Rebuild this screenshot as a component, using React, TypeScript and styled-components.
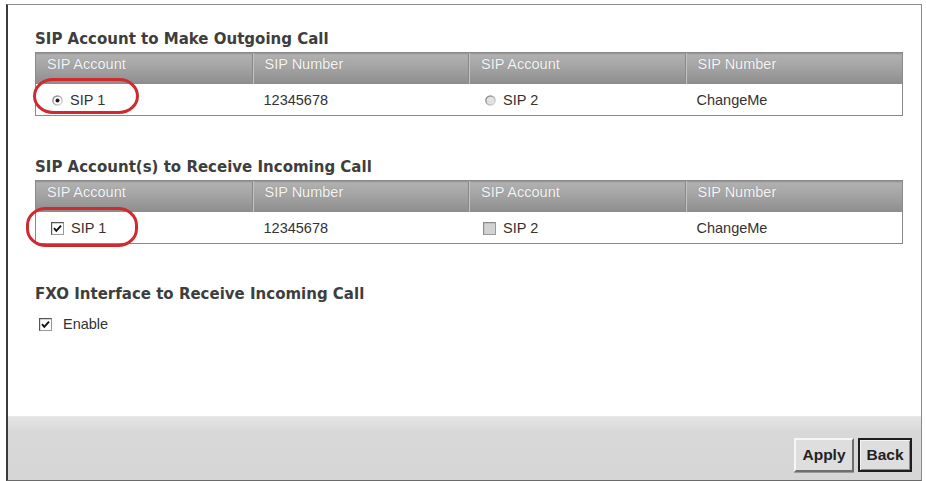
import React from "react";
import styled, { createGlobalStyle } from "styled-components";

const GlobalStyle = createGlobalStyle`
  html, body {
    margin: 0;
    padding: 0;
    background: #ffffff;
  }
  body {
    font-family: "Liberation Sans", Arial, sans-serif;
    color: #333333;
  }
`;

const Frame = styled.div`
  box-sizing: border-box;
  margin: 4px 0 0 6px;
  width: 916px;
  height: 477px;
  border-top: 1px solid #8c8c8c;
  border-left: 2px solid #3a3a3a;
  border-right: 1px solid #8a8a8a;
  border-bottom: 1px solid #6a6a6a;
  display: flex;
  flex-direction: column;
  background: #ffffff;
`;

const Content = styled.div`
  flex: 1;
  padding: 25px 18px 0 27px;
  display: flex;
  flex-direction: column;
`;

const Section = styled.section<{ $gap: number }>`
  margin-top: ${(p) => p.$gap}px;
  display: flex;
  flex-direction: column;
`;

const Title = styled.h2`
  margin: 0 0 4px;
  font-family: "DejaVu Sans", Verdana, sans-serif;
  font-weight: bold;
  font-size: 15px;
  line-height: 18px;
  color: #3e3e3e;
`;

const Table = styled.div`
  box-sizing: border-box;
  border: 1px solid #8a8a8a;
  display: grid;
  grid-template-columns: repeat(4, 1fr);
`;

const HeadCell = styled.div<{ $first?: boolean }>`
  height: 31px;
  box-sizing: border-box;
  padding: 2px 0 0 11px;
  font-size: 14.5px;
  line-height: 18px;
  color: #f4f4f4;
  text-shadow: 0 0 1px rgba(120, 120, 120, 0.8);
  background: linear-gradient(
    to bottom,
    #8f8f8f 0px,
    #b0b0b0 2px,
    #a6a6a6 40%,
    #989898 75%,
    #8c8c8c 100%
  );
  border-left: ${(p) => (p.$first ? "none" : "1px solid #c2c2c2")};
  box-shadow: ${(p) => (p.$first ? "none" : "-1px 0 0 #8a8a8a")};
`;

const DataCell = styled.div`
  position: relative;
  height: 31px;
  box-sizing: border-box;
  display: flex;
  align-items: center;
  gap: 8px;
  padding: 1px 0 0 11px;
  font-size: 14.5px;
  color: #333333;
  background: #ffffff;
`;

const ChoiceCell = styled(DataCell)<{ $indent: number }>`
  padding-left: ${(p) => p.$indent}px;
  gap: 7px;
`;

const Mark = styled.div<{ $left: number; $top: number; $w: number; $h: number }>`
  position: absolute;
  left: ${(p) => p.$left}px;
  top: ${(p) => p.$top}px;
  width: ${(p) => p.$w}px;
  height: ${(p) => p.$h}px;
  box-sizing: border-box;
  border: 3px solid #cf2a30;
  border-radius: 20px / 18px;
  pointer-events: none;
`;

const OptionRow = styled.label`
  margin-top: 9px;
  margin-left: 4px;
  height: 16px;
  display: flex;
  align-items: center;
  gap: 11px;
  font-size: 14.5px;
  color: #333333;
`;

const Footer = styled.div`
  height: 64px;
  box-sizing: border-box;
  display: flex;
  justify-content: flex-end;
  align-items: flex-end;
  gap: 4px;
  padding: 0 9px 8px 0;
  background: linear-gradient(
    to bottom,
    #e3e3e3 0px,
    #dedede 8px,
    #d8d8d8 14px,
    #d6d6d6 100%
  );
  border-top: 1px solid #e9e9e9;
`;

const Button = styled.button<{ $focused?: boolean; $w: number }>`
  width: ${(p) => p.$w}px;
  height: 34px;
  box-sizing: border-box;
  padding: 0;
  font-family: "Liberation Sans", Arial, sans-serif;
  font-weight: bold;
  font-size: 15.5px;
  color: #222222;
  background: #dedede;
  border: 2px solid;
  border-color: #f6f6f6 #6e6e6e #6e6e6e #f6f6f6;
  ${(p) =>
    p.$focused
      ? `border: 2px solid #1e1e1e; box-shadow: inset 1px 1px 0 #f4f4f4, inset -1px -1px 0 #8a8a8a;`
      : `box-shadow: 0 1px 0 #9a9a9a;`}
`;

function Radio({ checked }: { checked: boolean }) {
  const id = checked ? "radio-ring-on" : "radio-ring-off";
  return (
    <svg width="11" height="11" viewBox="0 0 11 11" aria-hidden>
      <defs>
        <linearGradient id={id} x1="0" y1="0" x2="1" y2="1">
          <stop offset="0" stopColor="#7e7e7e" />
          <stop offset="1" stopColor="#e2e2e2" />
        </linearGradient>
      </defs>
      <circle
        cx="5.5"
        cy="5.5"
        r="4.6"
        fill={checked ? "#ffffff" : "#e2e2e2"}
        stroke={`url(#${id})`}
        strokeWidth="1.5"
      />
      {checked && <circle cx="5.5" cy="5.5" r="2" fill="#1e1e1e" />}
    </svg>
  );
}

function Check({ checked }: { checked: boolean }) {
  return (
    <svg width="13" height="13" viewBox="0 0 13 13" aria-hidden>
      <rect x="0.5" y="0.5" width="12" height="12" fill={checked ? "#ffffff" : "#d2d2d2"} stroke="#9a9a9a" />
      <path d="M0.5 12.5 V0.5 H12.5" fill="none" stroke={checked ? "#555555" : "#8c8c8c"} strokeWidth="1.4" />
      {checked && (
        <path d="M3 6.2 L5.3 8.8 L10 3.6" fill="none" stroke="#111111" strokeWidth="1.9" />
      )}
    </svg>
  );
}

const headers = ["SIP Account", "SIP Number", "SIP Account", "SIP Number"];

export default function App() {
  return (
    <>
      <GlobalStyle />
      <Frame>
        <Content>
          <Section $gap={0}>
            <Title>SIP Account to Make Outgoing Call</Title>
            <Table>
              {headers.map((h, i) => (
                <HeadCell key={i} $first={i === 0}>
                  {h}
                </HeadCell>
              ))}
              <ChoiceCell $indent={16}>
                <Radio checked />
                <span>SIP 1</span>
                <Mark $left={-3} $top={-6} $w={106} $h={36} />
              </ChoiceCell>
              <DataCell>12345678</DataCell>
              <ChoiceCell $indent={16}>
                <Radio checked={false} />
                <span>SIP 2</span>
              </ChoiceCell>
              <DataCell>ChangeMe</DataCell>
            </Table>
          </Section>

          <Section $gap={42}>
            <Title>SIP Account(s) to Receive Incoming Call</Title>
            <Table>
              {headers.map((h, i) => (
                <HeadCell key={i} $first={i === 0}>
                  {h}
                </HeadCell>
              ))}
              <ChoiceCell $indent={15}>
                <Check checked />
                <span>SIP 1</span>
                <Mark $left={-10} $top={-5} $w={112} $h={40} />
              </ChoiceCell>
              <DataCell>12345678</DataCell>
              <ChoiceCell $indent={14}>
                <Check checked={false} />
                <span>SIP 2</span>
              </ChoiceCell>
              <DataCell>ChangeMe</DataCell>
            </Table>
          </Section>

          <Section $gap={41}>
            <Title>FXO Interface to Receive Incoming Call</Title>
            <OptionRow>
              <Check checked />
              <span>Enable</span>
            </OptionRow>
          </Section>
        </Content>
        <Footer>
          <Button $w={60}>Apply</Button>
          <Button $w={54} $focused>
            Back
          </Button>
        </Footer>
      </Frame>
    </>
  );
}
